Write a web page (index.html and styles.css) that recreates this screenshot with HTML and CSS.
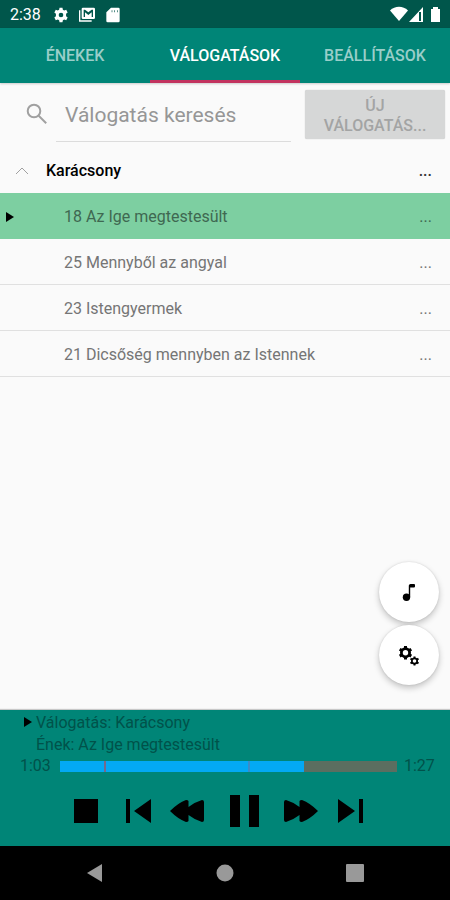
FILE: index.html
```html
<!DOCTYPE html>
<html lang="hu">
<head>
<meta charset="utf-8">
<meta name="viewport" content="width=device-width, initial-scale=1">
<title>Válogatások</title>
<link rel="stylesheet" href="styles.css">
</head>
<body>
<header class="status">
  <span class="clock">2:38</span>
  <svg class="status-icon" viewBox="0 0 24 24"><path fill-rule="evenodd" d="M9.800 1h4.400l.6 3.100 2 1.200 3-1 2.200 3.800-2.400 2.200v3.400l2.400 2.200-2.200 3.800-3-1-2 1.200-.6 3.100H9.800l-.6-3.100-2-1.200-3 1L2 15.900l2.400-2.200v-3.400L2 8.100l2.200-3.800 3 1 2-1.200zM12 8.500a3.500 3.500 0 1 0 0 7 3.500 3.500 0 0 0 0-7z"/></svg>
  <svg class="status-icon wide" viewBox="0 0 26 24"><path d="M1 5v17h19v-2H3V5z"/><path fill-rule="evenodd" d="M7 1h16a2 2 0 0 1 2 2v13a2 2 0 0 1-2 2H7a2 2 0 0 1-2-2V3a2 2 0 0 1 2-2zm1 3v11h2V8l5 4 5-4v7h2V4h-2l-5 4-5-4z"/></svg>
  <svg class="status-icon" viewBox="0 0 24 24"><path fill-rule="evenodd" d="M9 1h11a2 2 0 0 1 2 2v18a2 2 0 0 1-2 2H4a2 2 0 0 1-2-2V8zm1 4v3h1V5zm4 0v3h1V5zm4 0v3h1V5z"/></svg>
  <span class="spacer"></span>
  <svg class="signal" viewBox="0 0 52 18"><path d="M0 4.500C5-.5 13-.5 18 4.500L9 15z"/><path fill-rule="evenodd" d="M19 16 33 1v15zM29 6v9h2V6z"/><path d="M43 1h5v2h2v13h-9V3h2z"/></svg>
</header>
<nav class="tabs">
  <button class="tab">ÉNEKEK</button>
  <button class="tab active">VÁLOGATÁSOK</button>
  <button class="tab">BEÁLLÍTÁSOK</button>
</nav>
<main class="content">
  <form class="search">
    <label class="search-label" for="query" aria-label="Keresés"><svg viewBox="0 0 22 22"><circle cx="8" cy="8" r="6.300"/><path d="m12.700 12.700 7.500 7.500"/></svg></label>
    <input id="query" class="query" type="text" placeholder="Válogatás keresés">
    <button class="create" type="button" disabled>ÚJ VÁLOGATÁS...</button>
  </form>
  <section>
    <div class="group">
      <button class="toggle" aria-label="Összecsukás"><svg viewBox="0 0 14 8"><path d="m1 7 6-6 6 6"/></svg></button>
      <h2 class="group-name">Karácsony</h2>
      <button class="more">...</button>
    </div>
    <ul class="songs">
      <li class="song playing"><svg class="marker" viewBox="0 0 8 10"><path d="m0 0 8 5-8 5z"/></svg><span class="song-name">18 Az Ige megtestesült</span><button class="more">...</button></li>
      <li class="song"><span class="song-name">25 Mennyből az angyal</span><button class="more">...</button></li>
      <li class="song"><span class="song-name">23 Istengyermek</span><button class="more">...</button></li>
      <li class="song"><span class="song-name">21 Dicsőség mennyben az Istennek</span><button class="more">...</button></li>
    </ul>
  </section>
  <div class="floating">
    <button class="fab" aria-label="Kotta"><svg viewBox="0 0 24 24"><circle cx="9.500" cy="17.200" r="3.700"/><path d="M11.800 17V5.500Q12 4 13.500 4h3.500q1 0 1 1v1.500q0 1-1 1h-3.800V17z"/></svg></button>
    <button class="fab" aria-label="Lejátszás beállításai"><svg viewBox="0 0 24 24"><g class="cog"><path d="M8.500 3v13.400M2.700 6.300l11.600 6.800M14.300 6.300 2.700 13.100"/><circle cx="8.500" cy="9.700" r="4"/></g><g class="cog small"><path d="M17.500 13.400v9.200M13.500 15.700l8 4.600M21.500 15.700l-8 4.600"/><circle cx="17.500" cy="18" r="2.500"/></g><circle class="hole" cx="8.500" cy="9.700" r="2.700"/><circle class="hole" cx="17.500" cy="18" r="1.800"/></svg></button>
  </div>
</main>
<footer class="player">
  <div class="now">
    <svg class="marker" viewBox="0 0 8 10"><path d="m0 0 8 5-8 5z"/></svg>
    <p>Válogatás: Karácsony<br>Ének: Az Ige megtestesült</p>
  </div>
  <div class="timeline">
    <span>1:03</span>
    <input class="seek" type="range" min="0" max="87" value="63" aria-label="Lejátszási pozíció">
    <span>1:27</span>
  </div>
  <div class="controls">
    <button class="stop" aria-label="Leállítás"><svg width="24" height="24" viewBox="0 0 24 24"><path d="M0 0h24v24H0z"/></svg></button>
    <button class="skip" aria-label="Előző"><svg width="25" height="26" viewBox="0 0 25 26"><path d="M0 1h4v24H0zM25 1v24L8 13z"/></svg></button>
    <button class="wind" aria-label="Vissza"><svg width="34" height="22" viewBox="0 0 34 22"><path d="M0 11Q8 3 16 0q2 0 2.500 1v6Q25 2 32 0q2 0 2 2v18q0 2-2 2-7-2-13.500-7v6q-.5 1-2.500 1Q8 19 0 11z"/></svg></button>
    <button class="pause" aria-label="Szünet"><svg width="29" height="32" viewBox="0 0 29 32"><path d="M0 0h10v32H0zM19 0h10v32H19z"/></svg></button>
    <button class="wind" aria-label="Előre"><svg width="34" height="22" viewBox="0 0 34 22"><path d="M34 11Q26 3 18 0q-2 0-2.500 1v6Q9 2 2 0 0 0 0 2v18q0 2 2 2 7-2 13.500-7v6q.5 1 2.500 1 8-3 16-11z"/></svg></button>
    <button class="skip" aria-label="Következő"><svg width="25" height="26" viewBox="0 0 25 26"><path d="M21 1h4v24h-4zM0 1v24l17-12z"/></svg></button>
  </div>
</footer>
<nav class="system">
  <button aria-label="Vissza"><svg viewBox="0 0 20 20"><path d="M2 10 17 1v18z"/></svg></button>
  <button aria-label="Kezdőképernyő"><svg viewBox="0 0 20 20"><circle cx="10" cy="10" r="8.500"/></svg></button>
  <button aria-label="Áttekintés"><svg viewBox="0 0 20 20"><rect x="1" y="1" width="18" height="18" rx="1"/></svg></button>
</nav>
</body>
</html>
```
FILE: styles.css
```css
* { box-sizing: border-box; }

body {
  margin: 0;
  min-height: 100vh;
  display: flex;
  flex-direction: column;
  background: #fafafa;
  color: #757575;
  font: 16px/22px Roboto, sans-serif;
}

button {
  border: 0;
  padding: 0;
  background: none;
  color: inherit;
  font: inherit;
}

svg { display: block; }

.status {
  display: flex;
  align-items: center;
  height: 28px;
  padding: 2px 8px 0 10px;
  background: #00564b;
  color: #fff;
  fill: #fff;
}

.clock { margin-right: 12px; }
.status-icon { width: 16px; height: 16px; margin-right: 9px; }
.status-icon.wide { width: 18px; }
.spacer { flex: 1; }
.signal { width: 52px; height: 18px; }

.tabs {
  display: grid;
  grid-template-columns: repeat(3, 1fr);
  height: 55px;
  background: #008577;
  box-shadow: 0 1px 2px #00000030;
}

.tab {
  border-bottom: 3px solid transparent;
  padding-top: 3px;
  color: #99cec9;
  font-weight: 500;
}

.tab.active { color: #fff; border-color: #c2335f; }

.content {
  position: relative;
  flex: 1;
}

.search {
  display: flex;
  height: 64px;
  padding: 7px 5px 5px 26px;
}

.search-label { width: 30px; padding-top: 13px; }

.search-label svg {
  width: 22px;
  height: 22px;
  fill: none;
  stroke: #a0a0a0;
  stroke-width: 2;
}

.query {
  flex: 1;
  min-width: 0;
  border: 0;
  border-bottom: 1px solid #dcdcdc;
  padding: 0 9px 2px;
  background: none;
  font: 21px Roboto, sans-serif;
  outline: 0;
}

.query::placeholder { color: #969696; }

.create {
  width: 140px;
  height: 49px;
  margin-left: 14px;
  border-radius: 2px;
  padding: 2px 16px 0;
  background: #d6d7d7;
  color: #a3a4a4;
  line-height: 20px;
  font-weight: 500;
  box-shadow: 0 0 1px #bbb;
}

.group, .song {
  display: flex;
  align-items: center;
  height: 46px;
  padding-top: 2px;
  padding-right: 18px;
}

.toggle { width: 46px; padding-left: 15px; }

.toggle svg {
  width: 14px;
  height: 8px;
  fill: none;
  stroke: #a0a0a0;
}

.group-name {
  flex: 1;
  margin: 0;
  color: #000;
  font-size: 16px;
  font-weight: 500;
}

.group .more { color: #333; font-weight: 500; }

.songs { margin: 0; padding: 0; list-style: none; }

.song {
  padding-left: 64px;
  border-bottom: 1px solid #e0e0e0;
}

.song-name { flex: 1; }

.playing {
  position: relative;
  border-color: #7dcfa1;
  background: #7dcfa1;
  color: #3f6851;
}

.marker { width: 8px; height: 10px; }
.playing .marker { position: absolute; left: 6px; }

.floating {
  position: absolute;
  right: 11px;
  bottom: 25px;
  display: grid;
  gap: 3px;
}

.fab {
  display: grid;
  place-items: center;
  width: 60px;
  height: 60px;
  border-radius: 50%;
  background: #fff;
  box-shadow: 0 3px 6px #00000038, 0 0 2px #00000020;
}

.fab svg { width: 24px; height: 24px; }
.cog { stroke: #000; stroke-width: 3; }
.cog.small { stroke-width: 2; }
.hole { fill: #fff; }

.player {
  height: 136px;
  padding-top: 1px;
  background: #008577;
  color: #00524a;
  box-shadow: 0 -1px 1px #0003;
}

.now { display: flex; padding-left: 24px; }
.now .marker { margin: 6px 4px 0 0; }
.now p { margin: 0; padding-top: 1px; }

.timeline {
  display: flex;
  align-items: center;
  height: 20px;
  padding: 0 15px 0 20px;
}

.timeline span { width: 31px; }

.seek {
  flex: 1;
  min-width: 0;
  height: 11px;
  margin: 0 7px 0 9px;
  appearance: none;
  background:
    linear-gradient(#75698b, #75698b) 13% 0 / 2px 100% no-repeat,
    linear-gradient(#3c8bc8, #3c8bc8) 56% 0 / 2px 100% no-repeat,
    linear-gradient(90deg, #03a9f4 72.4%, #5b6e60 72.4%);
}

.seek::-webkit-slider-thumb { appearance: none; width: 0; height: 0; }

.controls {
  display: flex;
  align-items: center;
  justify-content: center;
  height: 69px;
  padding-right: 18px;
}

.controls button { display: grid; place-items: center; height: 48px; }
.stop { width: 56px; }
.skip { width: 48px; }
.wind { width: 50px; }
.pause { width: 64px; }

.system {
  display: flex;
  align-items: center;
  justify-content: center;
  height: 54px;
  background: #000;
  fill: #999;
}

.system button { width: 130px; display: grid; place-items: center; }
.system svg { width: 20px; height: 20px; }
```
